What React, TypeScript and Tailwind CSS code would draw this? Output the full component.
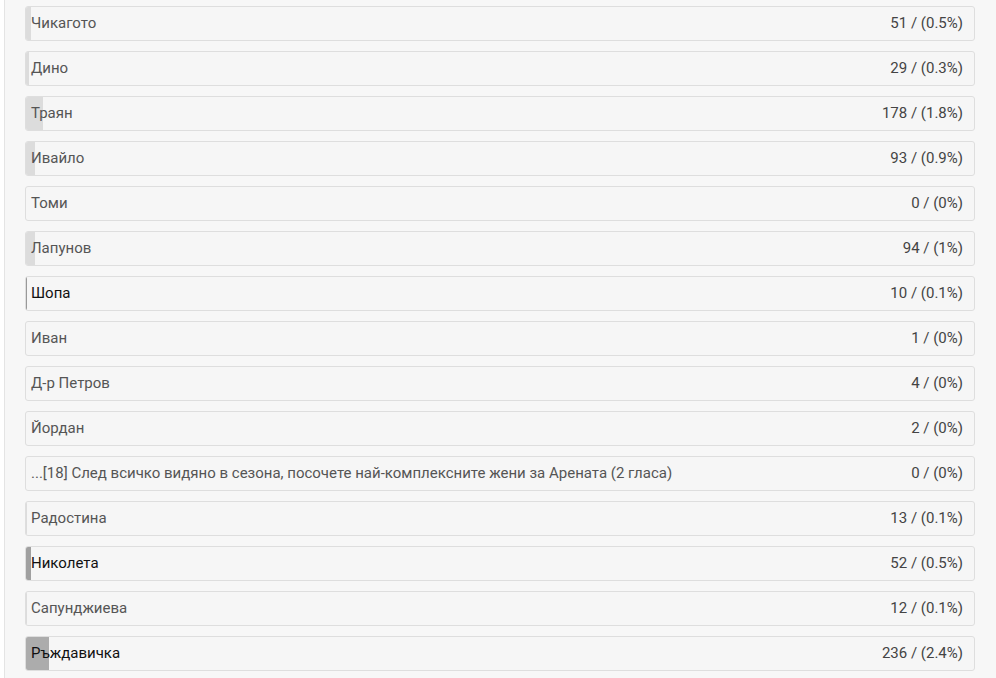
import React from "react";

type Row = { name: string; votes: number; pct: string; w: number; dark?: string };

const rows: Row[] = [
  { name: "Чикагото", votes: 51, pct: "0.5%", w: 0.5 },
  { name: "Дино", votes: 29, pct: "0.3%", w: 0.3 },
  { name: "Траян", votes: 178, pct: "1.8%", w: 1.8 },
  { name: "Ивайло", votes: 93, pct: "0.9%", w: 0.9 },
  { name: "Томи", votes: 0, pct: "0%", w: 0 },
  { name: "Лапунов", votes: 94, pct: "1%", w: 0.95 },
  { name: "Шопа", votes: 10, pct: "0.1%", w: 0.1, dark: "#999999" },
  { name: "Иван", votes: 1, pct: "0%", w: 0 },
  { name: "Д-р Петров", votes: 4, pct: "0%", w: 0 },
  { name: "Йордан", votes: 2, pct: "0%", w: 0 },
  { name: "...[18] След всичко видяно в сезона, посочете най-комплексните жени за Арената (2 гласа)", votes: 0, pct: "0%", w: 0 },
  { name: "Радостина", votes: 13, pct: "0.1%", w: 0.1 },
  { name: "Николета", votes: 52, pct: "0.5%", w: 0.5, dark: "#a0a0a0" },
  { name: "Сапунджиева", votes: 12, pct: "0.1%", w: 0.1 },
  { name: "Ръждавичка", votes: 236, pct: "2.4%", w: 2.4, dark: "#acacac" },
];

export default function App() {
  return (
    <div className="w-[996px] h-[678px] overflow-hidden bg-white" style={{ fontFamily: "Roboto, 'Noto Sans', sans-serif" }}>
      <div className="ml-[4px] h-full border-l border-[#e4e4e4] bg-[#f7f7f7] pl-[20px] pr-[20px] pt-[6px] flex flex-col gap-[10px]">
        {rows.map((r, i) => (
          <div
            key={i}
            className="relative h-[35px] w-[950px] shrink-0 rounded-[3px] border border-[#dedede] bg-[#f6f6f6] overflow-hidden"
          >
            {r.w > 0 && (
              <div
                className="absolute left-0 top-0 bottom-0"
                style={{ width: `${(r.w / 100) * 950}px`, backgroundColor: r.dark ?? "#dcdcdc" }}
              />
            )}
            <div className="relative flex h-full items-center justify-between pl-[5px] pr-[11px] text-[15px]">
              <span className={r.dark ? "text-[#111111]" : "text-[#555555]"}>{r.name}</span>
              <span className="text-[#444444]">
                {r.votes} / ({r.pct})
              </span>
            </div>
          </div>
        ))}
      </div>
    </div>
  );
}
